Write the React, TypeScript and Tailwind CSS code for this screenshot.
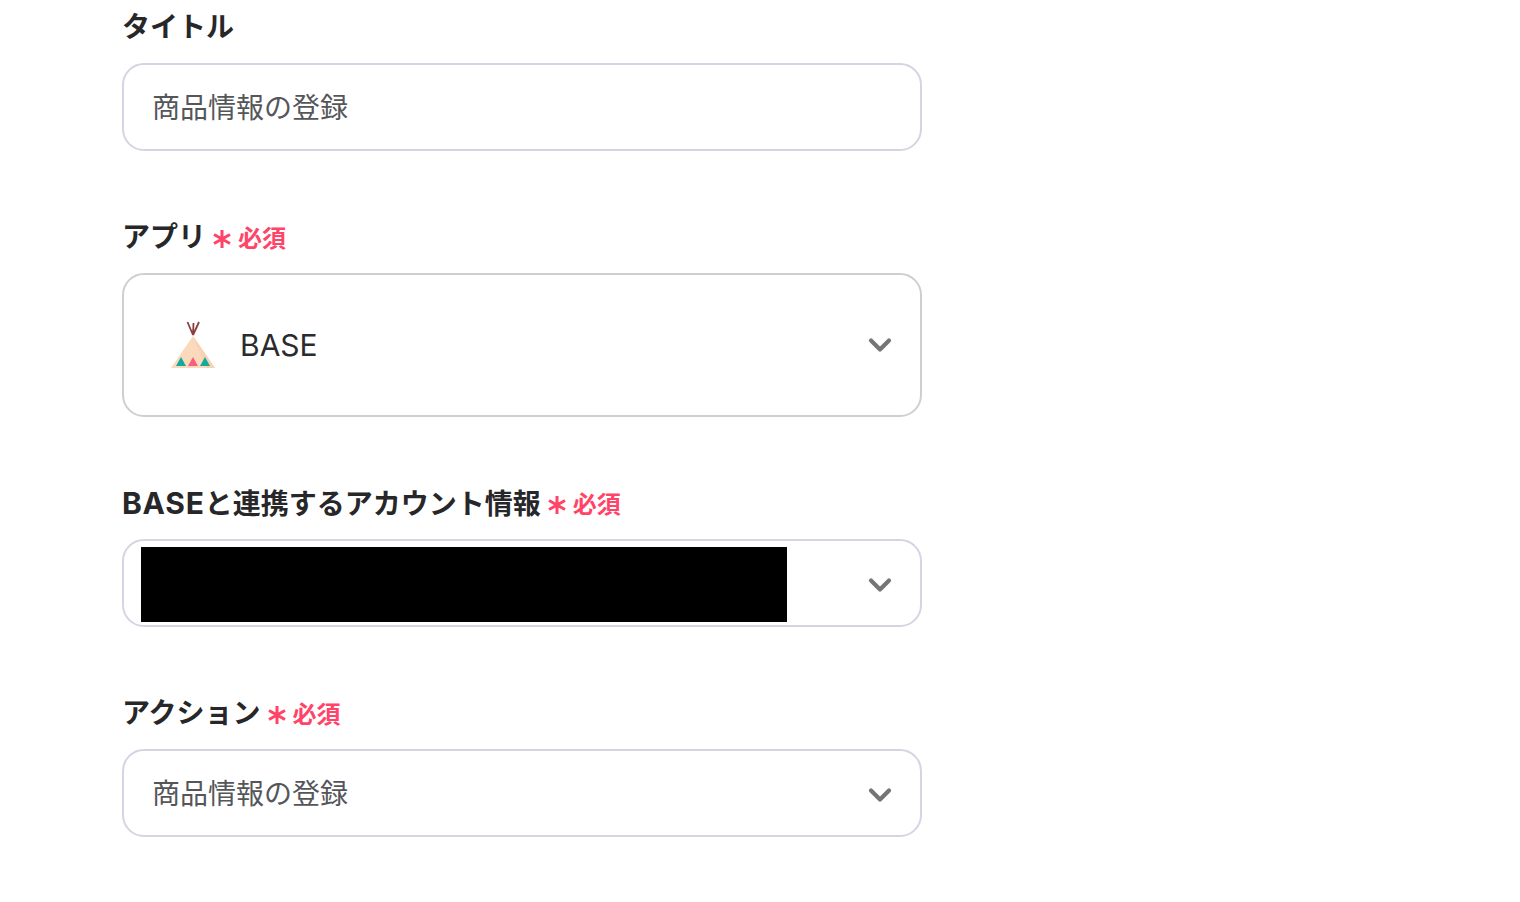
import { ChevronDown } from 'lucide-react'

const font = { fontFamily: '"Inter", "Noto Sans CJK JP", sans-serif' }

function Tipi() {
  return (
    <svg width="46" height="48" viewBox="0 0 46 48" fill="none">
      <path d="M23 15 L45 47 H1 Z" fill="#fbd9bd" />
      <path d="M23 15 L36 47 H45 Z" fill="#f8d2b3" />
      <path d="M23 14 L17.500 1 M23 14 L23.500 2 M23 14 L29 1" stroke="#8c3f3f" strokeWidth="1.800" />
      <path d="M11 36 L16 45 H6 Z" fill="#12a9a0" />
      <path d="M23 36 L28 45 H18 Z" fill="#f5607c" />
      <path d="M35 36 L40 45 H30 Z" fill="#12a9a0" />
    </svg>
  )
}

function Label({ children, required }: { children: React.ReactNode; required?: boolean }) {
  return (
    <div className="mb-4 flex h-10 items-center">
      <span className="text-[28px] leading-10 font-bold text-[#27272a]">{children}</span>
      {required ? (
        <span className="mt-1 ml-[6px] flex items-center text-[24px] leading-10 font-bold text-[#ff4468]">
          <svg width="20" height="20" viewBox="0 0 20 20" className="mr-1.5" stroke="#ff4468" strokeWidth="3">
            <path d="M10 1 V19 M2 5.500 L18 14.500 M18 5.500 L2 14.500" />
          </svg>
          必須
        </span>
      ) : null}
    </div>
  )
}

function Box({ children, chevron, tall, pad }: { children: React.ReactNode; chevron?: boolean; tall?: boolean; pad?: string }) {
  return (
    <div
      className={`flex w-[800px] items-center justify-between rounded-[22px] border-2 bg-white pr-[22px] ${tall ? 'h-[144px] border-[#cfcfd2]' : 'h-[88px] border-[#d3d5e2]'} ${pad ?? 'pl-[28px]'}`}
    >
      <div className="flex items-center">{children}</div>
      {chevron ? (
        <ChevronDown size={36} strokeWidth={2.8} className={tall ? 'text-[#757575]' : 'mt-1 text-[#757575]'} />
      ) : null}
    </div>
  )
}

export default function App() {
  return (
    <div className="h-[902px] overflow-hidden bg-white pt-[7px] pl-[122px]" style={font}>
      <Label>タイトル</Label>
      <Box>
        <span className="mt-0.5 text-[28px] text-[#55565a]">商品情報の登録</span>
      </Box>

      <div className="mt-[66px]">
        <Label required>アプリ</Label>
        <Box chevron tall pad="pl-[46px]">
          <Tipi />
          <span className="ml-[24px] text-[30px] text-[#2b2b2e]">BASE</span>
        </Box>
      </div>

      <div className="mt-[66px]">
        <Label required>
          <span className="text-[30px] tracking-[0.75px]">BASE</span>と連携するアカウント情報
        </Label>
        <Box chevron pad="pl-[17px]">
          <div className="mt-[3px] h-[75px] w-[646px] bg-black" />
        </Box>
      </div>

      <div className="mt-[66px]">
        <Label required>アクション</Label>
        <Box chevron>
          <span className="mt-0.5 text-[28px] text-[#55565a]">商品情報の登録</span>
        </Box>
      </div>
    </div>
  )
}
